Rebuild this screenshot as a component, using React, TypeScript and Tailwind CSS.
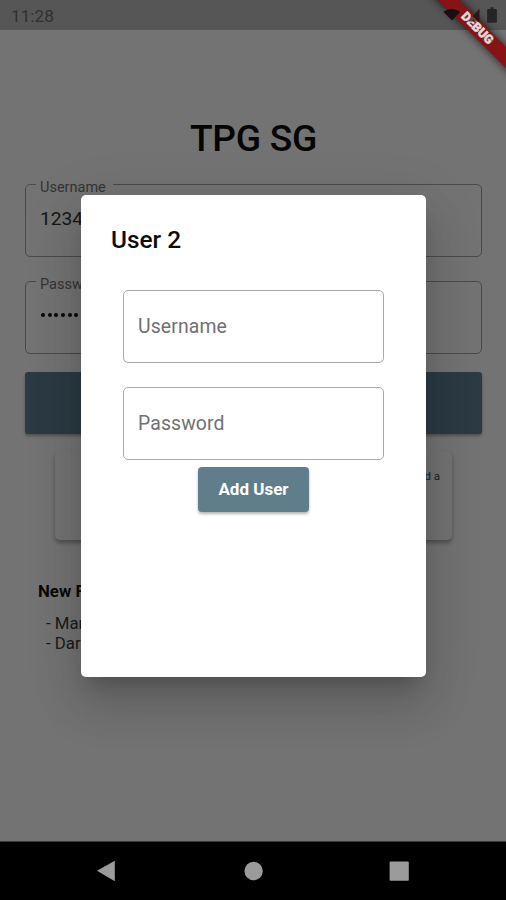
import type { ReactNode } from "react";
import clsx from "clsx";

interface OutlinedFieldProps {
  label: string;
  children: ReactNode;
  className?: string;
}

// Background field with a floating label cut into the outline
function OutlinedField({ label, children, className }: OutlinedFieldProps) {
  return (
    <fieldset
      className={clsx(
        "rounded-[5px] border border-[#4a4a4a] pl-[10px] text-[19.2px] text-[#161616]",
        className
      )}
    >
      <legend className="h-[8px] pl-[4px] pr-[7px] text-[14.5px] leading-[16px] text-[#343434]">
        {label}
      </legend>
      <div className="pl-[4px]">{children}</div>
    </fieldset>
  );
}

function DialogField({ label, className }: { label: string; className?: string }) {
  return (
    <div
      className={clsx(
        "flex h-[73px] w-[261px] items-center rounded-[5px] border border-[#a9a9a9] pl-[14px] text-[19.4px] tracking-[0.12px] text-[#707070]",
        className
      )}
    >
      {label}
    </div>
  );
}

function StatusBar() {
  return (
    <header className="flex h-[30px] items-center justify-between bg-[#565656] pl-[11px] pr-2">
      <span className="pt-[2px] text-[17.2px] leading-5 text-[#303030]">11:28</span>
      <svg width="56" height="20" viewBox="0 0 56 20" className="relative z-10">
        <path d="M1.5 7C6 3 13 3 18 7L10 15.5Z" fill="#171010" />
        <path d="M37.5 3.5v13H26Z" fill="#260808" fillOpacity=".72" />
        <path d="M46 4h2.5V2.3h3V4H54a.9.9 0 0 1 .9.9v12a.9.9 0 0 1-.9.9h-8a.9.9 0 0 1-.9-.9v-12A.9.9 0 0 1 46 4Z" fill="#252525" />
      </svg>
    </header>
  );
}

function DebugBanner() {
  return (
    <div className="absolute left-[377px] top-[21px] z-[5] flex h-[15px] w-[200px] rotate-45 items-center justify-center bg-[#861416] text-[12.4px] font-black leading-none text-[#e0dada] shadow-[0_0_8px_rgba(0,0,0,0.75)] [-webkit-text-stroke:0.5px_#e0dada]">
      DEBUG
    </div>
  );
}

function LoginPage() {
  return (
    <main className="h-[811px] overflow-hidden bg-[#737373] pl-[25px] pr-6">
      <h1 className="pt-[84px] text-center text-[37.2px] font-medium leading-[48px] tracking-[-0.3px] text-[#050505]">
        TPG SG
      </h1>
      <OutlinedField label="Username" className="mt-[18px] h-[77px]">
        <p className="pt-[19px] leading-6">1234</p>
      </OutlinedField>
      <OutlinedField label="Password" className="mt-[20px] h-[77px]">
        <p className="flex gap-[2.7px] pt-[28px] pl-[1px]">
          {[0, 1, 2, 3, 4, 5].map((dot) => (
            <span key={dot} className="size-[4px] rounded-full bg-[#080808]" />
          ))}
        </p>
      </OutlinedField>
      <div className="mt-[18px] h-[62px] rounded-[3px] bg-[#2b3a43] shadow-[0_2px_3px_rgba(0,0,0,0.3)]" />
      <div className="mx-[30px] mt-[17px] h-[89px] rounded-[5px] bg-[#737373] pr-[12px] pt-[17px] text-right text-[11.5px] leading-4 text-[#202020] shadow-[0_3px_4px_rgba(0,0,0,0.32)]">
        d a
      </div>
      <h2 className="mt-[41px] pl-[13px] text-[16.8px] font-bold leading-5 text-[#0a0a0a]">New F</h2>
      <ul className="mt-3 pl-[21px] text-[16.8px] leading-5 text-[#1a1a1a]">
        <li>- Mar</li>
        <li>- Dar</li>
      </ul>
    </main>
  );
}

function AddUserDialog() {
  return (
    <div
      role="dialog"
      className="absolute left-[81px] top-[195px] flex h-[482px] w-[345px] flex-col items-center rounded-[5px] bg-white shadow-[0_14px_18px_-9px_rgba(0,0,0,0.2),0_29px_46px_4px_rgba(0,0,0,0.12),0_11px_56px_10px_rgba(0,0,0,0.07)]"
    >
      <h2 className="w-full pl-[30px] pt-[30px] text-[24.4px] font-medium leading-[30px] text-[#0c0c0c]">
        User 2
      </h2>
      <DialogField label="Username" className="mt-[35px]" />
      <DialogField label="Password" className="mt-[24px]" />
      <button className="mt-[7px] h-[45px] w-[111px] rounded-[4px] bg-[#607d8b] text-[17px] font-bold text-white shadow-[0_2px_3px_rgba(0,0,0,0.3)]">
        Add User
      </button>
    </div>
  );
}

function NavigationBar() {
  return (
    <nav className="h-[59px] border-t border-[#3a3a3a] bg-black">
      <svg width="506" height="58" viewBox="0 0 506 58" fill="#9b9b9b">
        <path d="M97 28.8 114.8 18.7V39.2Z" />
        <circle cx="253.6" cy="29" r="9.2" />
        <rect x="389.6" y="19.5" width="19.2" height="19.2" rx="1" />
      </svg>
    </nav>
  );
}

export default function App() {
  return (
    <div className="relative h-[900px] w-[506px] overflow-hidden font-[Roboto,sans-serif]">
      <StatusBar />
      <DebugBanner />
      <LoginPage />
      <AddUserDialog />
      <NavigationBar />
    </div>
  );
}
